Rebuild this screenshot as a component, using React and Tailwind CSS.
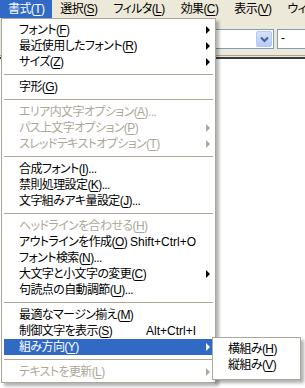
import React from 'react';

const font = "font-['Liberation_Sans','Noto_Sans_CJK_JP',sans-serif] [font-feature-settings:'palt'] tracking-[-0.6px]";

const items = [
  { t: 'フォント', k: 'F', arrow: true },
  { t: '最近使用したフォント', k: 'R', arrow: true },
  { t: 'サイズ', k: 'Z', arrow: true },
  'sep',
  { t: '字形', k: 'G' },
  'sep',
  { t: 'エリア内文字オプション', k: 'A', dots: true, disabled: true },
  { t: 'パス上文字オプション', k: 'P', arrow: true, disabled: true },
  { t: 'スレッドテキストオプション', k: 'T', arrow: true, disabled: true },
  'sep',
  { t: '合成フォント', k: 'I', dots: true },
  { t: '禁則処理設定', k: 'K', dots: true },
  { t: '文字組みアキ量設定', k: 'J', dots: true },
  'sep',
  { t: 'ヘッドラインを合わせる', k: 'H', disabled: true },
  { t: 'アウトラインを作成', k: 'O', sc: 'Shift+Ctrl+O' },
  { t: 'フォント検索', k: 'N', dots: true },
  { t: '大文字と小文字の変更', k: 'C', arrow: true },
  { t: '句読点の自動調節', k: 'U', dots: true },
  'sep',
  { t: '最適なマージン揃え', k: 'M' },
  { t: '制御文字を表示', k: 'S', sc: 'Alt+Ctrl+I' },
  { t: '組み方向', k: 'Y', arrow: true, active: true },
  'sep',
  { t: 'テキストを更新', k: 'L', arrow: true, disabled: true },
];

const menubar = [
  { t: '書式', k: 'T' },
  { t: '選択', k: 'S' },
  { t: 'フィルタ', k: 'L' },
  { t: '効果', k: 'C' },
  { t: '表示', k: 'V' },
  { t: 'ウィンドウ', k: 'W' },
];

function Label({ t, k, dots }) {
  return (
    <span className="whitespace-nowrap">
      {t}(<span className="underline underline-offset-[2px]">{k}</span>){dots ? '...' : ''}
    </span>
  );
}

function Arrow({ color }) {
  return (
    <span
      className={`absolute right-[3px] top-[4px] w-0 h-0 border-y-[4px] border-y-transparent border-l-[4px] ${color}`}
    />
  );
}

function MenuRow({ item }) {
  let text = 'text-black';
  let arrow = 'border-l-black';
  if (item.disabled) {
    text = 'text-[#aca899]';
    arrow = 'border-l-[#aca899]';
  }
  if (item.active) {
    text = 'text-white bg-[#316ac5]';
    arrow = 'border-l-white';
  }
  return (
    <div className={`relative flex h-[16px] leading-[16px] mx-[2px] pl-[15px] ${text}`}>
      <Label {...item} />
      {item.sc && <span className="ml-auto mr-[17px] whitespace-nowrap tracking-normal">{item.sc}</span>}
      {item.arrow && <Arrow color={arrow} />}
    </div>
  );
}

export default function App() {
  return (
    <div className={`relative w-[305px] h-[388px] overflow-hidden bg-white text-[12px] ${font}`}>
      {/* menu bar */}
      <div className="flex h-[18px] bg-[#ece9d8] text-black whitespace-nowrap overflow-hidden">
        {menubar.map((m, i) => (
          <div
            key={m.t}
            className={`flex shrink-0 items-center px-2 leading-[18px] ${i === 0 ? 'bg-[#316ac5] text-white' : ''}`}
          >
            <Label {...m} />
          </div>
        ))}
      </div>

      {/* toolbar */}
      <div className="h-[37px] bg-[#ece9d8] flex justify-end items-start pt-[11px] gap-[3px]">
        <div className="w-[80px] h-[20px] bg-white border border-[#7f9db9] flex justify-end items-center pr-[1px]">
          <div className="w-[16px] h-[16px] rounded-[2px] bg-gradient-to-b from-[#d4e1fc] to-[#b6cbf7] border border-[#b3c8f5] flex items-center justify-center">
            <svg width="9" height="7" viewBox="0 0 9 7">
              <path d="M1 1.5 L4.5 5 L8 1.5" fill="none" stroke="#4d6185" strokeWidth="2" />
            </svg>
          </div>
        </div>
        <div className="w-[28px] h-[20px] bg-white border border-r-0 border-[#7f9db9] pl-[3px] leading-[17px]">-</div>
      </div>
      <div className="h-px bg-[#a7a597]" />
      <div className="h-px bg-[#ece9d8]" />
      <div className="h-[2px] bg-[#3c3c3c]" />

      {/* 書式 menu */}
      <div className="absolute left-[1px] top-[18px] w-[215px] bg-white border border-[#aca899] pt-[3px] pb-[2px] shadow-[3px_3px_3px_rgba(0,0,0,0.3)]">
        {items.map((item, i) =>
          item === 'sep' ? (
            <div key={i} className="h-[9px] flex items-center mx-[2px]">
              <div className="h-px w-full bg-[#aca899]" />
            </div>
          ) : (
            <MenuRow key={i} item={item} />
          )
        )}
      </div>

      {/* 組み方向 submenu */}
      <div className="absolute left-[212px] top-[337px] w-[89px] bg-white border border-[#aca899] pt-[3px] pb-[6px] shadow-[3px_3px_3px_rgba(0,0,0,0.3)]">
        <div className="h-[16px] leading-[16px] pl-[15px] text-black">
          <Label t="横組み" k="H" />
        </div>
        <div className="h-[16px] leading-[16px] pl-[15px] text-black">
          <Label t="縦組み" k="V" />
        </div>
      </div>
    </div>
  );
}
